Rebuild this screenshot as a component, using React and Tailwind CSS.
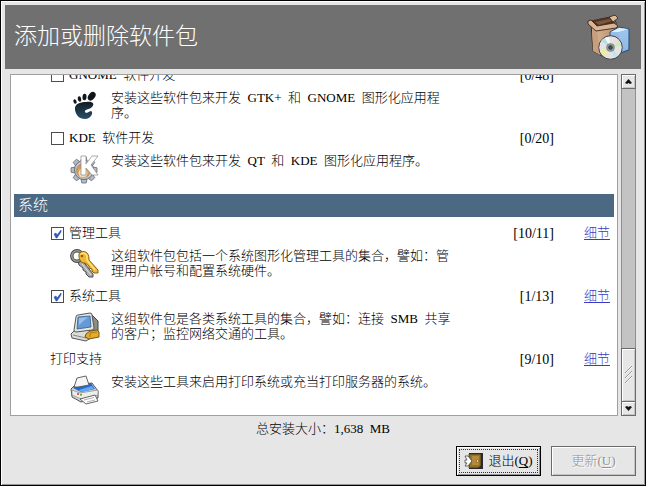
import React from "react";

function PackageIcon() {
  return (
    <svg viewBox="0 0 46 48" className="h-12 w-[46px] shrink-0" aria-hidden="true">
      <defs>
        <linearGradient id="carton" x1="0" y1="0" x2="1" y2="0">
          <stop offset="0" stopColor="#dcb898" />
          <stop offset="1" stopColor="#b98f6e" />
        </linearGradient>
        <linearGradient id="bluebox" x1="0" y1="0" x2="0" y2="1">
          <stop offset="0" stopColor="#a4c8ee" />
          <stop offset="1" stopColor="#6c9fd4" />
        </linearGradient>
      </defs>
      <g strokeLinejoin="round" strokeWidth="1">
        <path d="M5 11L7 38L16 43L30 37V9L24 4L5 8Z" fill="url(#carton)" stroke="#3a2a20" />
        <path d="M5 8L24 4L29 10L11 14Z" fill="#4f3222" />
        <path d="M9 9L23 6L26 8L13 12Z" fill="#7c563c" />
        <path d="M6 14L11 16L14 42L7 38Z" fill="#c79f7e" />
        <path d="M2 8L5 7L11 13L28 10L32 13L30 15L10 18L2 11Z" fill="#d9b595" stroke="#3a2a20" strokeWidth=".9" />
        <path d="M23 4L29 2L32 5L27 9Z" fill="#dcb999" stroke="#3a2a20" strokeWidth=".9" />
        <path d="M24 19L33 14L43 16V37L32 41L24 37Z" fill="url(#bluebox)" stroke="#284e79" />
        <path d="M25 19L33 15L42 16L33 19Z" fill="#e0eefb" />
        <path d="M33 19L42 17V36L33 39Z" fill="#a2c6ec" opacity=".6" />
      </g>
      <circle cx="24.5" cy="34.5" r="11.8" fill="#e4e4e2" stroke="#444" />
      <path d="M24.5 34.5L15 28A11 11 0 0 1 19 25Z" fill="#b8dfe8" />
      <path d="M24.5 34.5L19 25A11 11 0 0 1 23 24Z" fill="#f8f8f8" />
      <path d="M24.5 34.5L33 28A11 11 0 0 1 35 33Z" fill="#c9edb5" />
      <path d="M24.5 34.5L30 25A11 11 0 0 1 33 28Z" fill="#f2d9df" />
      <path d="M24.5 34.5L14 38A11 11 0 0 0 18 43Z" fill="#eeeca0" />
      <path d="M24.5 34.5L28 45A11 11 0 0 0 32 42Z" fill="#c2e4ef" />
      <circle cx="24.5" cy="34.5" r="4" fill="#929797" stroke="#707575" strokeWidth=".5" />
      <circle cx="24.5" cy="34.5" r="1.8" fill="#375777" stroke="#222" strokeWidth=".7" />
    </svg>
  );
}

function FootIcon() {
  return (
    <svg viewBox="0 0 32 32" className="size-8" aria-hidden="true">
      <defs>
        <linearGradient id="foot" x1="0" y1="0" x2="0" y2="1">
          <stop offset="0" stopColor="#111a20" />
          <stop offset="1" stopColor="#28516b" />
        </linearGradient>
      </defs>
      <path d="M6 20C5 14 11 12 17 12C24 11 26 14 23 17C20 20 15 19 16 22C17 24 19 22 22 21C25 22 22 29 16 29C10 29 7 25 6 20Z" fill="url(#foot)" />
      <ellipse cx="22.7" cy="6.2" rx="3.2" ry="4.8" transform="rotate(38 22.7 6.2)" fill="#101519" />
      <ellipse cx="15.5" cy="7" rx="2" ry="3.3" transform="rotate(5 15.5 7)" fill="#101519" />
      <ellipse cx="10.5" cy="9" rx="1.7" ry="2.8" transform="rotate(-12 10.5 9)" fill="#101519" />
      <ellipse cx="6" cy="11.5" rx="1.5" ry="2.3" transform="rotate(-25 6 11.5)" fill="#101519" />
    </svg>
  );
}

const TEETH = [0, 45, 90, 135, 180, 225, 270, 315];

function GearIcon() {
  return (
    <svg viewBox="0 0 32 32" className="size-8" aria-hidden="true">
      <g fill="#b5bac3" stroke="#656a73" strokeWidth=".8">
        {TEETH.map((a) => (
          <path key={a} d="M13 7L13.8 3H18.2L19 7Z" transform={`translate(-1 1) rotate(${a} 16 16)`} />
        ))}
        <circle cx="15" cy="17" r="9.6" />
      </g>
      <circle cx="15" cy="17" r="8.3" fill="#d5d8dd" />
      <circle cx="14.5" cy="17.5" r="7" fill="#dc9b4c" stroke="#8a7a66" strokeWidth=".7" />
      <circle cx="14" cy="20" r="4.5" fill="#f8dcae" />
      <path d="M12 3H17V11L23 3H29L22 12L29 22H23L17 15V22H12Z" fill="#fff" stroke="#888" strokeWidth=".7" strokeLinejoin="round" />
    </svg>
  );
}

function KeysIcon() {
  return (
    <svg viewBox="0 0 32 32" className="size-8" aria-hidden="true">
      <g strokeLinejoin="round">
        <path d="M9 13L13 12L24 26L24 29L20 29L17 26V24L14 22V20L10 17Z" fill="#a9a9a7" stroke="#4b4b4b" />
        <path d="M13 16L22 27" stroke="#e5e5e5" />
        <circle cx="8" cy="8" r="5.2" fill="none" stroke="#474747" strokeWidth="3.4" />
        <circle cx="8" cy="8" r="5.2" fill="none" stroke="#999" strokeWidth="1.6" />
        <path d="M10 8C9 4 15 2 18 5C20 7 20 10 20 12L29 22L29 25L25 25L23 23V21L20 20V18L16 15C12 15 10 12 10 8Z" fill="#f3b72d" stroke="#85601a" />
        <path d="M12 7C13 4 17 5 18 8L18 12L26 22" fill="none" stroke="#ffe27e" strokeWidth="1.6" />
        <circle cx="13" cy="8" r="1.3" fill="#875f13" />
      </g>
    </svg>
  );
}

function ComputerIcon() {
  return (
    <svg viewBox="0 0 32 32" className="size-8" aria-hidden="true">
      <g strokeLinejoin="round">
        <path d="M2 23L7 18L25 19L28 23L17 30L3 27Z" fill="#ddddd8" stroke="#555" />
        <path d="M4 24L17 27L24 23" fill="none" stroke="#888" />
        <path d="M22 3L29 10V21L21 21Z" fill="#8c8c88" stroke="#444" />
        <path d="M9 4L21 2Q23 2 23 4L25 17Q25 19 23 19L7 21Q5 21 5 19L7 6Q7 4 9 4Z" fill="#e6e6e1" stroke="#555" />
        <path d="M9 6L21 5L22 16L8 18Z" fill="#659bd5" stroke="#315b91" strokeWidth=".8" />
        <path d="M10 7L19 6L10 14Z" fill="#94c0eb" />
        <path d="M17 23L21 20L28 19L30 21V26L20 28L16 26Z" fill="#e3ad25" stroke="#765516" />
        <path d="M21 22L28 21M21 22V26" stroke="#8f6617" strokeWidth=".7" />
      </g>
    </svg>
  );
}

function PrinterIcon() {
  return (
    <svg viewBox="0 0 32 32" className="size-8" aria-hidden="true">
      <g strokeLinejoin="round">
        <path d="M2 15L6 11L23 9L29 17L29 24L12 28L3 23Z" fill="#d4d4d2" stroke="#555" />
        <path d="M4 14L7 11L22 9L26 15L12 18Z" fill="#2668cf" />
        <path d="M10 16L23 12L25 15L12 18Z" fill="#62a8f4" />
        <path d="M5 13L8 4L17 2L20 11L9 13Z" fill="#f5f5f5" stroke="#555" strokeWidth=".9" />
        <path d="M3 16L11 19L29 16V21L12 25L3 21Z" fill="#ededeb" stroke="#777" strokeWidth=".6" />
        <path d="M11 25L26 21L29 27L17 30Z" fill="#fff" stroke="#555" strokeWidth=".9" />
        <path d="M15 26L25 23.5M18 28L26 26" stroke="#999" strokeWidth=".8" />
      </g>
      <circle cx="9" cy="20" r="1" fill="#d4392c" />
      <circle cx="12" cy="20.8" r="1" fill="#42a83a" />
    </svg>
  );
}

function ExitIcon() {
  return (
    <svg viewBox="0 0 20 20" className="size-5 shrink-0" aria-hidden="true">
      <rect x="5" y="2" width="14" height="16" fill="#28283c" />
      <path d="M5 3H17V15L14 17H5Z" fill="#94702a" stroke="#33260c" strokeWidth=".7" />
      <rect x="8" y="5" width="7" height="9" fill="#b48b3b" />
      <circle cx="13.5" cy="10" r="1.4" fill="#f4d58a" stroke="#624713" strokeWidth=".6" />
      <path d="M1 5H4L8 10L4 15H1L3 12H1V9H3Z" fill="#fff" stroke="#444" strokeWidth=".8" strokeLinejoin="round" />
    </svg>
  );
}

function Tick({ id, checked }) {
  return (
    <span className="grid size-[13px] shrink-0">
      <input
        id={id}
        type="checkbox"
        defaultChecked={checked}
        className="peer col-start-1 row-start-1 size-[13px] appearance-none border border-[#4c4c4c] bg-white"
      />
      <svg viewBox="0 0 13 13" className="pointer-events-none col-start-1 row-start-1 hidden size-[13px] peer-checked:block" aria-hidden="true">
        <path d="M3 7L5 6L6 8L10 3L10 5L6 11L5 11Z" fill="#3158b5" stroke="#3158b5" strokeWidth=".6" />
      </svg>
    </span>
  );
}

function Group({ id, name, count, icon, details, checkbox = true, checked = false, children }) {
  return (
    <li className="h-[63px] shrink-0">
      <div className="flex h-6 items-center pr-1">
        {checkbox ? (
          <div className="flex flex-1 items-center gap-[5px] pl-[37px]">
            <Tick id={id} checked={checked} />
            <label htmlFor={id}>{name}</label>
          </div>
        ) : (
          <span className="flex-1 pl-9">{name}</span>
        )}
        <span className="text-[14px]">{count}</span>
        <span className="w-14 text-right">
          {details && <a href="#details" className="text-[#3a3ac4] underline underline-offset-2">细节</a>}
        </span>
      </div>
      <div className="flex gap-[10px] pt-[3px] pl-[55px]">
        {icon}
        <p className="w-[342px] leading-[15px]">{children}</p>
      </div>
    </li>
  );
}

const bevel = "border border-[#6b6b6b] bg-[#e6e6e6] shadow-[inset_1px_1px_0_#fff,inset_-1px_-1px_0_#c3c3c3]";

function Scrollbar() {
  return (
    <div className="flex w-[15px] flex-col border border-[#8f8f8f] bg-[#c3c3c3]">
      <button type="button" aria-label="向上" className={`-mx-px -mt-px grid h-[15px] place-items-center ${bevel}`}>
        <svg viewBox="0 0 7 5" className="h-[5px] w-[7px]" aria-hidden="true"><path d="M3.5 0L7 4L5 5L3.5 4L2 5L0 4Z" fill="#111" /></svg>
      </button>
      <div className="flex-1" />
      <div className={`-mx-px grid h-[54px] place-items-center ${bevel}`}>
        <svg viewBox="0 0 7 18" className="h-[18px] w-[7px]" aria-hidden="true">
          <path d="M0 7L7 0M0 12L7 5M0 17L7 10" stroke="#999" />
          <path d="M1 7L7 1M1 12L7 6M1 17L7 11" stroke="#fff" strokeWidth=".7" />
        </svg>
      </div>
      <button type="button" aria-label="向下" className={`-mx-px -mt-px -mb-px grid h-[15px] place-items-center ${bevel}`}>
        <svg viewBox="0 0 7 5" className="h-[5px] w-[7px]" aria-hidden="true"><path d="M3.5 5L7 1L5 0L3.5 1L2 0L0 1Z" fill="#111" /></svg>
      </button>
    </div>
  );
}

export default function App() {
  return (
    <div className="flex h-screen flex-col border border-black bg-[#e6e6e6] font-['Liberation_Serif','Noto_Sans_CJK_SC',serif] text-[13px] font-light text-black shadow-[inset_1px_1px_0_#fff,inset_-1px_-1px_0_#969696]">
      <header className="mx-1 mt-1 flex h-16 shrink-0 items-center justify-between bg-[#707070] px-[9px]">
        <h1 className="text-[23px] font-light text-white">添加或删除软件包</h1>
        <PackageIcon />
      </header>

      <main className="mx-[9px] mt-[5px] flex min-h-0 flex-1 gap-[3px]">
        <div className="flex min-w-0 flex-1 flex-col justify-end overflow-hidden border border-[#a0a0a0] bg-white px-[3px] pb-[5px]">
          <ul>
            <Group id="gnome" name="GNOME&ensp;软件开发" count="[0/48]" icon={<FootIcon />}>
              安装这些软件包来开发&ensp;GTK+&ensp;和&ensp;GNOME&ensp;图形化应用程序。
            </Group>
            <Group id="kde" name="KDE&ensp;软件开发" count="[0/20]" icon={<GearIcon />}>
              安装这些软件包来开发&ensp;QT&ensp;和&ensp;KDE&ensp;图形化应用程序。
            </Group>
          </ul>
          <h2 className="mt-[5px] mb-1 flex h-[23px] shrink-0 items-center bg-[#4b6983] pl-1 text-[15px] font-light text-white">系统</h2>
          <ul>
            <Group id="admin" name="管理工具" count="[10/11]" details checked icon={<KeysIcon />}>
              这组软件包包括一个系统图形化管理工具的集合，譬如：管理用户帐号和配置系统硬件。
            </Group>
            <Group id="tools" name="系统工具" count="[1/13]" details checked icon={<ComputerIcon />}>
              这组软件包是各类系统工具的集合，譬如：连接&ensp;SMB&ensp;共享的客户；监控网络交通的工具。
            </Group>
            <Group id="print" name="打印支持" count="[9/10]" details checkbox={false} icon={<PrinterIcon />}>
              安装这些工具来启用打印系统或充当打印服务器的系统。
            </Group>
          </ul>
        </div>
        <Scrollbar />
      </main>

      <footer className="shrink-0 px-[9px] pb-[9px]">
        <p className="flex h-[30px] items-center justify-center pb-1">总安装大小：1,638&ensp;MB</p>
        <div className="flex justify-end gap-[10px]">
          <button type="button" className="h-[30px] w-[85px] border border-black bg-[#e6e6e6] p-[2px] shadow-[inset_1px_1px_0_#fff,inset_-1px_-1px_0_#969696]">
            <span className="flex h-full items-center justify-center gap-1 border border-dotted border-[#333]">
              <ExitIcon />
              <span>退出(<u className="underline-offset-2">Q</u>)</span>
            </span>
          </button>
          <button type="button" disabled className="h-[30px] w-[85px] border border-[#6b6b6b] bg-[#e6e6e6] text-[#929292] shadow-[inset_1px_1px_0_#fff,inset_-1px_-1px_0_#c3c3c3] text-shadow-[1px_1px_0_#fff]">
            更新(<u className="underline-offset-2">U</u>)
          </button>
        </div>
      </footer>
    </div>
  );
}
